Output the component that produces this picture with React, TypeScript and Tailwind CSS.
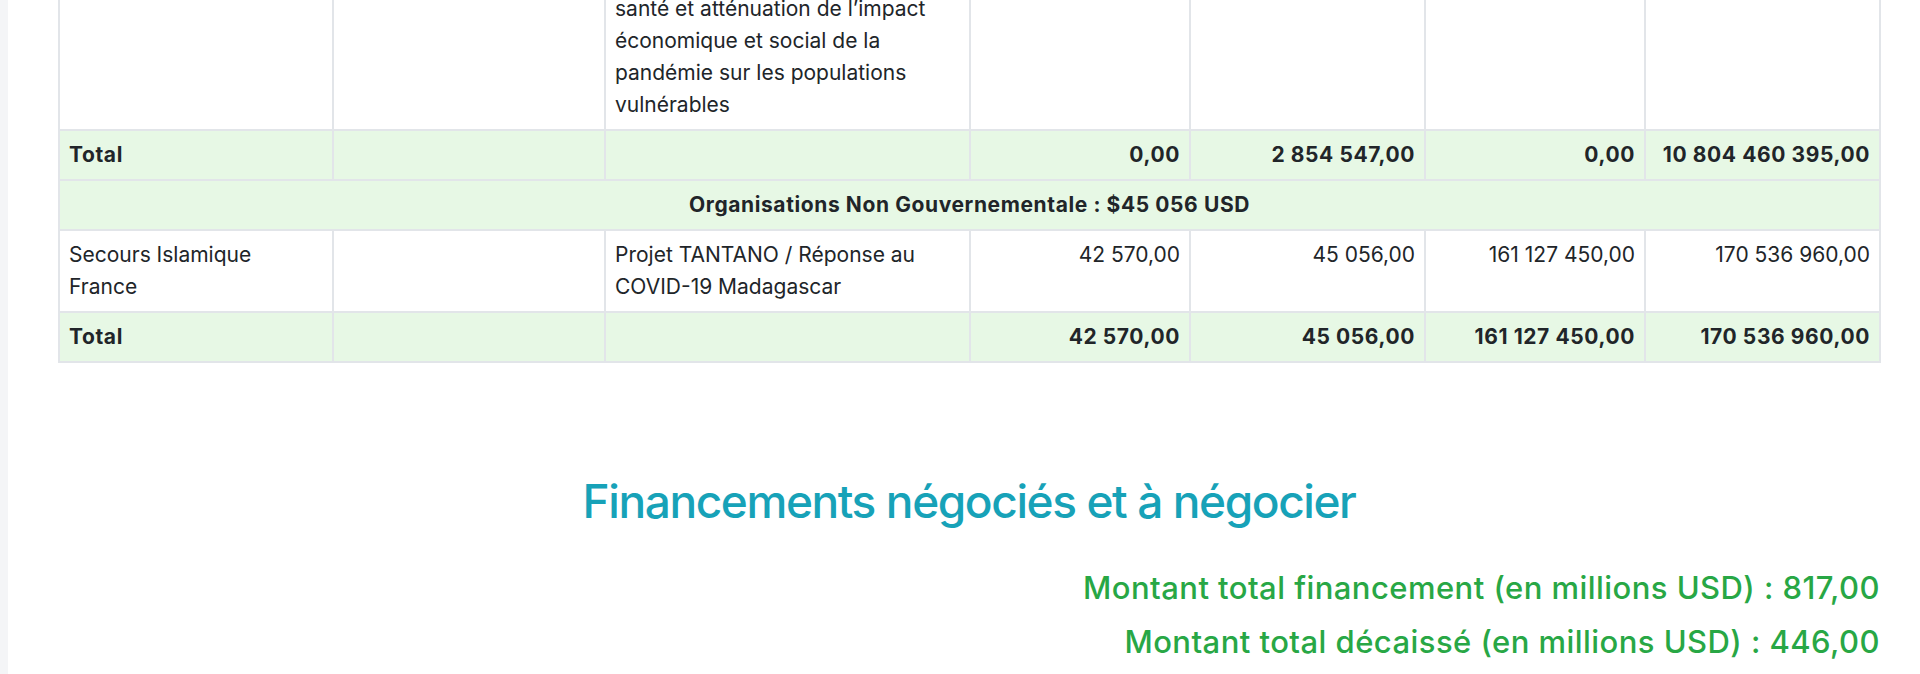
import React from "react";

const cell = "border-2 border-[#e2e5e9] px-[9px] py-[8px] align-top";
const totalRow = "bg-[#e7f8e5] font-bold tracking-[0.6px]";

const COLS = [274, 272, 365, 220, 235, 220, 235];

export default function App() {
  return (
    <div
      className="flex h-[674px] overflow-hidden bg-white text-[#212529]"
      style={{ fontFamily: "Inter, 'Noto Sans', sans-serif" }}
    >
      {/* sidebar edge */}
      <div className="w-2 shrink-0 bg-[#f4f5f7]" />

      <div className="flex-1 pl-[50px] pr-[32px]">
        <table className="-mt-[17px] w-[1822px] table-fixed border-collapse text-[21px] leading-[32px]">
          <colgroup>
            {COLS.map((w, i) => (
              <col key={i} style={{ width: w }} />
            ))}
          </colgroup>
          <tbody>
            <tr>
              <td className={cell}></td>
              <td className={cell}></td>
              <td className={cell}>
                santé et atténuation de l’impact économique et social de la pandémie sur les populations vulnérables
              </td>
              <td className={cell}></td>
              <td className={cell}></td>
              <td className={cell}></td>
              <td className={cell}></td>
            </tr>
            <tr className={totalRow}>
              <td className={cell}>Total</td>
              <td className={cell}></td>
              <td className={cell}></td>
              <td className={`${cell} text-right`}>0,00</td>
              <td className={`${cell} text-right`}>2 854 547,00</td>
              <td className={`${cell} text-right`}>0,00</td>
              <td className={`${cell} text-right`}>10 804 460 395,00</td>
            </tr>
            <tr className={totalRow}>
              <td className={`${cell} text-center`} colSpan={7}>
                Organisations Non Gouvernementale : $45 056 USD
              </td>
            </tr>
            <tr>
              <td className={cell}>Secours Islamique France</td>
              <td className={cell}></td>
              <td className={cell}>Projet TANTANO / Réponse au COVID-19 Madagascar</td>
              <td className={`${cell} text-right`}>42 570,00</td>
              <td className={`${cell} text-right`}>45 056,00</td>
              <td className={`${cell} text-right`}>161 127 450,00</td>
              <td className={`${cell} text-right`}>170 536 960,00</td>
            </tr>
            <tr className={totalRow}>
              <td className={cell}>Total</td>
              <td className={cell}></td>
              <td className={cell}></td>
              <td className={`${cell} text-right`}>42 570,00</td>
              <td className={`${cell} text-right`}>45 056,00</td>
              <td className={`${cell} text-right`}>161 127 450,00</td>
              <td className={`${cell} text-right`}>170 536 960,00</td>
            </tr>
          </tbody>
        </table>

        <div className="w-[1822px]">
          <h2 className="mt-[110px] text-center text-[46px] font-medium leading-[56px] tracking-[-1.4px] text-[#17a2b8]">
            Financements négociés et à négocier
          </h2>
          <div className="mt-[39px] text-right text-[31px] font-medium leading-[40px] tracking-[0.45px] text-[#28a745]">
            <p>Montant total financement (en millions USD) : 817,00</p>
            <p className="mt-[14px]">Montant total décaissé (en millions USD) : 446,00</p>
          </div>
        </div>
      </div>
    </div>
  );
}
